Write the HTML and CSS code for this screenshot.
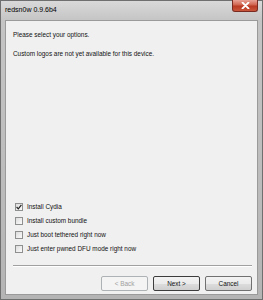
FILE: index.html
```html
<!DOCTYPE html>
<html>
<head>
<meta charset="utf-8">
<link rel="stylesheet" href="styles.css">
</head>
<body>
<div class="window">
  <div class="titlebar">
    <span class="title">redsn0w 0.9.6b4</span>
    <div class="close"><svg width="9" height="7" viewBox="0 0 9 7"><path d="M1.5 0.5 L7.5 6.5 M7.5 0.5 L1.5 6.5" stroke="#fff" stroke-width="1.8" stroke-linecap="round"/></svg></div>
  </div>
  <div class="client">
    <p class="msg">Please select your options.</p>
    <p class="msg second">Custom logos are not yet available for this device.</p>
    <div class="spacer"></div>
    <ul class="options">
      <li><span class="box checked"><svg width="6" height="6" viewBox="0 0 6 6"><path d="M0.6 3 L2.3 4.8 L5.4 0.8" stroke="#222" stroke-width="1.2" fill="none"/></svg></span>Install Cydia</li>
      <li><span class="box"></span>Install custom bundle</li>
      <li><span class="box"></span>Just boot tethered right now</li>
      <li><span class="box"></span>Just enter pwned DFU mode right now</li>
    </ul>
    <div class="sep"></div>
    <div class="buttons">
      <button class="btn disabled">&lt; Back</button>
      <button class="btn default">Next &gt;</button>
      <button class="btn cancel">Cancel</button>
    </div>
  </div>
</div>
</body>
</html>
```
FILE: styles.css
```css
html, body {
  margin: 0;
  padding: 0;
  background: #fff;
}
.window {
  width: 263px;
  height: 300px;
  box-sizing: border-box;
  border: 1px solid #6f6f6f;
  background: linear-gradient(#d9d9d9, #c4c4c4 20px, #bcbcbc 60%, #b4b4b4);
  display: flex;
  flex-direction: column;
  font-family: "Liberation Sans", Arial, sans-serif;
  color: #111;
}
.titlebar {
  height: 19px;
  display: flex;
  align-items: flex-start;
  justify-content: space-between;
  padding-left: 4px;
  box-sizing: border-box;
}
.title {
  font-size: 7px;
  line-height: 7px;
  margin-top: 5px;
  color: #000;
}
.close {
  width: 26px;
  height: 12px;
  margin-right: 4px;
  margin-top: -1px;
  box-sizing: border-box;
  border: 1px solid #7a2b21;
  border-top: none;
  border-radius: 0 0 3px 3px;
  background: linear-gradient(#e8a295, #d0644f 45%, #b93a22 55%, #c9563c);
  display: flex;
  align-items: center;
  justify-content: center;
}
.client {
  margin: 0 4px 4px 4px;
  flex: 1;
  background: #f0f0f0;
  border: 1px solid #9a9a9a;
  display: flex;
  flex-direction: column;
  padding: 0 5px 3px 7px;
  font-size: 6.4px;
}
.msg {
  margin: 10px 0 0 0;
  line-height: 7px;
}
.msg.second {
  margin-top: 12px;
}
.spacer {
  flex: 1;
}
.options {
  list-style: none;
  margin: 0 0 12px 0;
  padding: 0;
  display: flex;
  flex-direction: column;
  gap: 6px;
}
.options li {
  display: flex;
  align-items: center;
  height: 8px;
  line-height: 8px;
}
.box {
  width: 8px;
  height: 8px;
  box-sizing: border-box;
  border: 1px solid #8e8f8f;
  background: linear-gradient(135deg, #dcdcdc, #fbfbfb);
  margin: 0 4px 0 2px;
  display: flex;
  align-items: center;
  justify-content: center;
}
.sep {
  height: 0;
  border-top: 1px solid #a0a0a0;
  border-bottom: 1px solid #fff;
  margin: 0 0 9px 0;
}
.buttons {
  display: flex;
  justify-content: flex-end;
  gap: 5px;
}
.btn {
  width: 47px;
  height: 15px;
  padding: 0;
  font-family: "Liberation Sans", Arial, sans-serif;
  font-size: 6.4px;
  color: #111;
  border: 1px solid #707070;
  border-radius: 2px;
  background: linear-gradient(#f2f2f2, #ebebeb 50%, #dddddd 50%, #cfcfcf);
}
.btn.disabled {
  color: #a0a0a0;
  border-color: #adb2b5;
  background: #f4f4f4;
}
.btn.default {
  border-color: #3c3c3c;
}
```
